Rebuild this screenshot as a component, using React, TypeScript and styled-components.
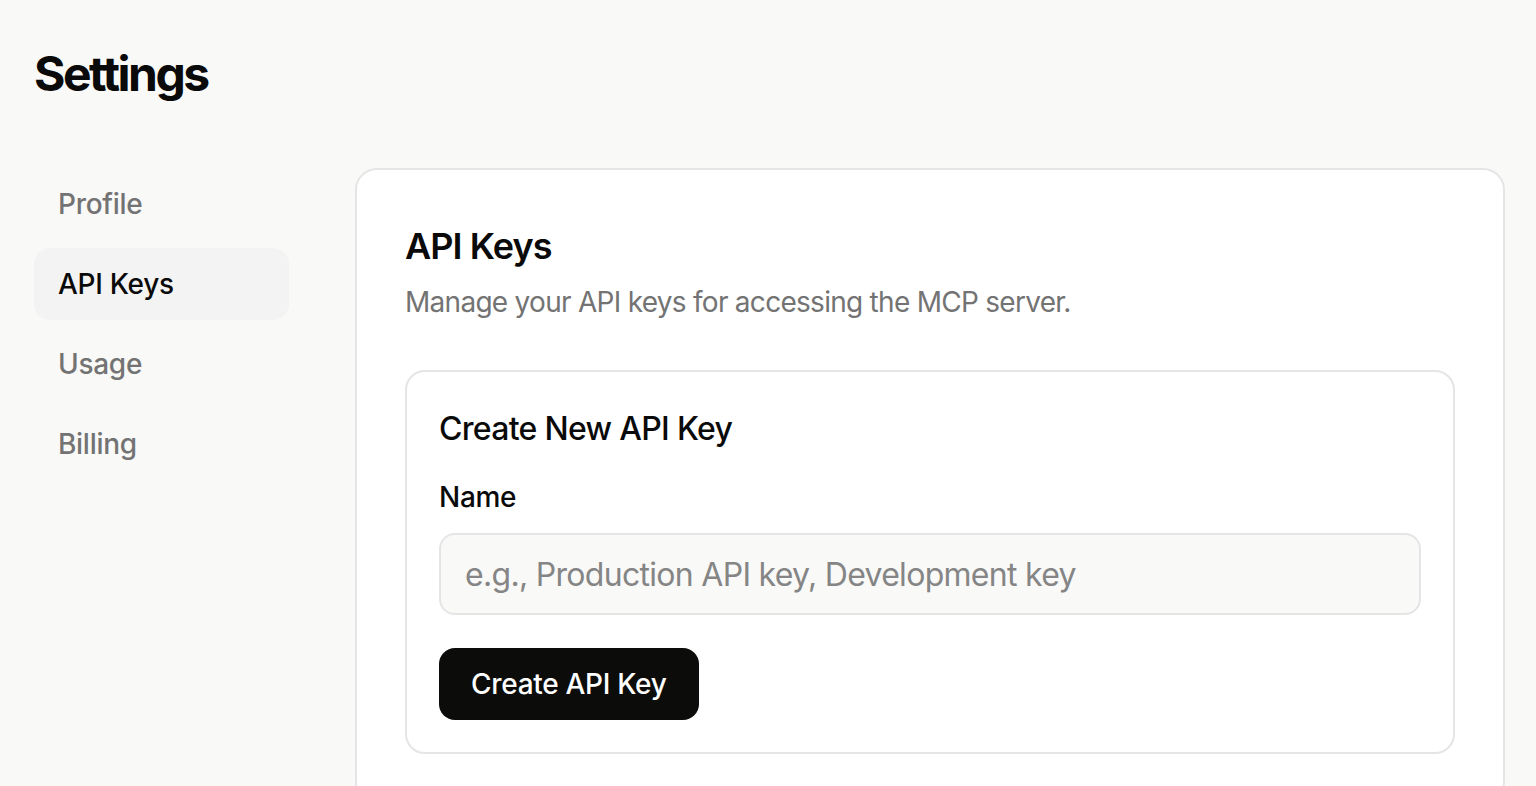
import React from "react";
import styled, { createGlobalStyle } from "styled-components";

const GlobalStyle = createGlobalStyle`
  html, body {
    margin: 0;
    padding: 0;
    background: #f9f9f8;
    overflow: hidden;
  }
  body {
    font-family: Inter, "Noto Sans", Arial, sans-serif;
    color: #0a0a0a;
    letter-spacing: -0.018em;
    -webkit-font-smoothing: antialiased;
  }
  * { box-sizing: border-box; }
`;

const Page = styled.div`
  padding: 42px 31px 0 34px;
  min-height: 786px;
`;

const Title = styled.h1`
  margin: 0 0 62px;
  font-size: 48px;
  line-height: 64px;
  font-weight: 700;
  letter-spacing: -2.5px;
  color: #0a0a0a;
`;

const Layout = styled.div`
  display: grid;
  grid-template-columns: 255px 1fr;
  column-gap: 66px;
  align-items: start;
`;

const Nav = styled.nav`
  display: flex;
  flex-direction: column;
  gap: 8px;
`;

const NavItem = styled.a<{ $active?: boolean }>`
  display: block;
  padding: 16px 24px;
  font-size: 28px;
  line-height: 40px;
  font-weight: 500;
  border-radius: 16px;
  text-decoration: none;
  color: ${(p) => (p.$active ? "#0a0a0a" : "#737373")};
  background: ${(p) => (p.$active ? "#f3f3f3" : "transparent")};
  cursor: pointer;
`;

const Card = styled.section`
  background: #ffffff;
  border: 2px solid #e5e5e5;
  border-radius: 22px;
  padding: 48px;
`;

const CardTitle = styled.h2`
  margin: 0;
  font-size: 36px;
  line-height: 56px;
  font-weight: 600;
  letter-spacing: -0.9px;
`;

const CardDesc = styled.p`
  margin: 8px 0 48px;
  font-size: 28px;
  line-height: 40px;
  letter-spacing: -0.72px;
  color: #737373;
`;

const InnerCard = styled.div`
  border: 2px solid #e5e5e5;
  border-radius: 20px;
  padding: 33px 32px 32px;
`;

const InnerTitle = styled.h3`
  margin: 0 0 24px;
  font-size: 32px;
  line-height: 48px;
  font-weight: 500;
  letter-spacing: -0.7px;
`;

const Label = styled.label`
  display: block;
  font-size: 28px;
  line-height: 40px;
  font-weight: 500;
  margin-bottom: 16px;
`;

const Input = styled.input`
  display: block;
  width: 100%;
  height: 82px;
  padding: 16px 24px;
  font-family: inherit;
  font-size: 32px;
  line-height: 48px;
  letter-spacing: -0.7px;
  color: #0a0a0a;
  background: #f9f9f8;
  border: 2px solid #e5e5e5;
  border-radius: 16px;
  outline: none;
  &::placeholder {
    color: #858585;
  }
`;

const Button = styled.button`
  margin-top: 33px;
  display: inline-block;
  padding: 16px 32px;
  font-family: inherit;
  font-size: 28px;
  line-height: 40px;
  font-weight: 500;
  letter-spacing: -0.3px;
  color: #ffffff;
  background: #0c0c0a;
  border: none;
  border-radius: 16px;
  cursor: pointer;
`;

export default function App() {
  return (
    <>
      <GlobalStyle />
      <Page>
        <Title>Settings</Title>
        <Layout>
          <Nav>
            <NavItem>Profile</NavItem>
            <NavItem $active>API Keys</NavItem>
            <NavItem>Usage</NavItem>
            <NavItem>Billing</NavItem>
          </Nav>
          <Card>
            <CardTitle>API Keys</CardTitle>
            <CardDesc>Manage your API keys for accessing the MCP server.</CardDesc>
            <InnerCard>
              <InnerTitle>Create New API Key</InnerTitle>
              <Label htmlFor="key-name">Name</Label>
              <Input id="key-name" placeholder="e.g., Production API key, Development key" />
              <Button>Create API Key</Button>
            </InnerCard>
          </Card>
        </Layout>
      </Page>
    </>
  );
}
